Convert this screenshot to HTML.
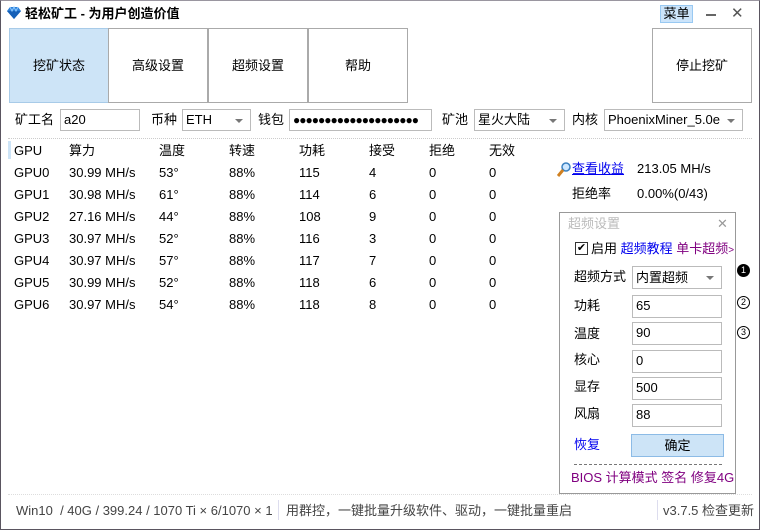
<!DOCTYPE html>
<html><head><meta charset="utf-8"><style>
*{margin:0;padding:0;box-sizing:border-box}
body{width:760px;height:530px;background:#fff;font-family:"Liberation Sans","Noto Sans CJK SC",sans-serif;font-size:13px;line-height:16px;color:#000;position:relative;overflow:hidden}
.a{position:absolute;white-space:nowrap;line-height:16px}
.win{position:absolute;left:0;top:0;width:760px;height:530px;border:1px solid #5a5560;border-top-color:#9a96a0}
.tab{position:absolute;top:28px;width:100px;height:75px;border:1px solid #aaa;background:#fff;text-align:center;line-height:73px;font-size:13px}
.inp{position:absolute;height:22px;border:1px solid #bbb;background:#fff;line-height:20px;padding-left:3px}
.dd::after{content:"";position:absolute;right:7px;top:9px;border:4px solid transparent;border-top:4px solid #777;border-bottom:0}
.c{position:absolute;font-size:13px;line-height:16px}
</style></head><body>
<div class="win"></div>
<svg class="a" style="left:6px;top:6px" width="16" height="14" viewBox="0 0 16 14"><path d="M1 5 L4 1 H12 L15 5 L8 13Z" fill="#2a7fd8"/><path d="M1 5 H15 L8 13Z" fill="#1560b8"/><path d="M4 1 L6 5 L8 1 L10 5 L12 1" stroke="#8cc8ff" fill="none"/></svg>
<div class="a" style="left:25px;top:6px;font-weight:bold;font-size:13px">轻松矿工 - 为用户创造价值</div>
<div class="a" style="left:660px;top:5px;width:33px;height:18px;background:#cce4fa;border:1px solid #99c9f2;text-align:center;line-height:16px">菜单</div>
<div class="a" style="left:706px;top:14px;width:10px;height:2px;background:#666"></div>
<div class="a" style="left:731px;top:6px;font-size:15px;color:#555">✕</div>
<div class="tab" style="left:9px;background:#cde4f7;border-color:#a8cbe8">挖矿状态</div>
<div class="tab" style="left:108px">高级设置</div>
<div class="tab" style="left:208px">超频设置</div>
<div class="tab" style="left:308px">帮助</div>
<div class="tab" style="left:652px">停止挖矿</div>
<div class="a" style="left:15px;top:112px">矿工名</div>
<div class="inp" style="left:60px;top:109px;width:80px">a20</div>
<div class="a" style="left:151px;top:112px">币种</div>
<div class="inp dd" style="left:182px;top:109px;width:69px">ETH</div>
<div class="a" style="left:258px;top:112px">钱包</div>
<div class="inp" style="left:289px;top:109px;width:143px;letter-spacing:-1px;font-size:12px;overflow:hidden">●●●●●●●●●●●●●●●●●●●●</div>
<div class="a" style="left:442px;top:112px">矿池</div>
<div class="inp dd" style="left:474px;top:109px;width:91px">星火大陆</div>
<div class="a" style="left:572px;top:112px">内核</div>
<div class="inp dd" style="left:604px;top:109px;width:139px">PhoenixMiner_5.0e</div>
<div class="a" style="left:8px;top:138px;width:744px;border-top:1px dotted #ccc"></div>
<div class="a" style="left:8px;top:141px;width:3px;height:18px;background:#cde4f7"></div>
<div id="t"></div>
<script>
var cols=[14,69,159,229,299,369,429,489];
var rows=[["GPU","算力","温度","转速","功耗","接受","拒绝","无效"],
["GPU0","30.99 MH/s","53°","88%","115","4","0","0"],
["GPU1","30.98 MH/s","61°","88%","114","6","0","0"],
["GPU2","27.16 MH/s","44°","88%","108","9","0","0"],
["GPU3","30.97 MH/s","52°","88%","116","3","0","0"],
["GPU4","30.97 MH/s","57°","88%","117","7","0","0"],
["GPU5","30.99 MH/s","52°","88%","118","6","0","0"],
["GPU6","30.97 MH/s","54°","88%","118","8","0","0"]];
var h="";rows.forEach(function(r,i){r.forEach(function(c,j){h+='<div class="c" style="left:'+cols[j]+'px;top:'+(143+i*22)+'px">'+c+'</div>'})});
document.getElementById("t").innerHTML=h;
</script>
<svg class="a" style="left:557px;top:162px" width="14" height="16" viewBox="0 0 14 16"><circle cx="9" cy="5" r="4" fill="#cfe8ff" stroke="#3a80c0" stroke-width="1.5"/><path d="M6 8 L1 14" stroke="#d08020" stroke-width="3"/></svg>
<div class="a" style="left:572px;top:161px;color:#0000ee;text-decoration:underline">查看收益</div>
<div class="a" style="left:637px;top:161px">213.05 MH/s</div>
<div class="a" style="left:572px;top:186px">拒绝率</div>
<div class="a" style="left:637px;top:186px">0.00%(0/43)</div>
<div class="a" style="left:559px;top:212px;width:177px;height:282px;border:1px solid #999"></div>
<div class="a" style="left:568px;top:216px;color:#bbb">超频设置</div>
<div class="a" style="left:717px;top:216px;color:#999;font-size:13px">✕</div>
<div class="a" style="left:575px;top:242px;width:13px;height:13px;border:1px solid #333;font-size:11px;line-height:11px;text-align:center">✔</div>
<div class="a" style="left:591px;top:241px">启用 <span style="color:#0000ee">超频教程</span> <span style="color:#800080">单卡超频</span><span style="color:#800080;font-size:10px">&gt;</span></div>
<div class="a" style="left:574px;top:269px">超频方式</div>
<div class="inp dd" style="left:632px;top:266px;width:90px;height:23px;line-height:21px">内置超频</div>
<div class="a" style="left:574px;top:298px">功耗</div><div class="inp" style="left:632px;top:295px;width:90px;height:23px">65</div>
<div class="a" style="left:574px;top:326px">温度</div><div class="inp" style="left:632px;top:322px;width:90px;height:23px">90</div>
<div class="a" style="left:574px;top:352px">核心</div><div class="inp" style="left:632px;top:350px;width:90px;height:23px">0</div>
<div class="a" style="left:574px;top:379px">显存</div><div class="inp" style="left:632px;top:377px;width:90px;height:23px">500</div>
<div class="a" style="left:574px;top:406px">风扇</div><div class="inp" style="left:632px;top:404px;width:90px;height:23px">88</div>
<div class="a" style="left:574px;top:437px;color:#0000ee">恢复</div>
<div class="a" style="left:631px;top:434px;width:93px;height:23px;background:#cde4f7;border:1px solid #8cbbe6;text-align:center;line-height:21px">确定</div>
<div class="a" style="left:574px;top:464px;width:148px;border-top:1px dashed #777"></div>
<div class="a" style="left:571px;top:470px;color:#800080">BIOS 计算模式 签名 修复4G</div>
<div class="a" style="left:737px;top:264px;width:13px;height:13px;border-radius:50%;background:#000;color:#fff;font-size:9px;text-align:center;line-height:13px">1</div>
<div class="a" style="left:737px;top:296px;width:13px;height:13px;border-radius:50%;border:1px solid #000;font-size:9px;text-align:center;line-height:11px">2</div>
<div class="a" style="left:737px;top:326px;width:13px;height:13px;border-radius:50%;border:1px solid #000;font-size:9px;text-align:center;line-height:11px">3</div>
<div class="a" style="left:8px;top:494px;width:744px;border-top:1px dotted #ddd"></div>
<div class="a" style="left:16px;top:503px;color:#444">Win10&nbsp; / 40G / 399.24 / 1070 Ti × 6/1070 × 1</div>
<div class="a" style="left:278px;top:500px;width:1px;height:20px;background:#dde"></div>
<div class="a" style="left:286px;top:503px;color:#444">用群控，一键批量升级软件、驱动，一键批量重启</div>
<div class="a" style="left:657px;top:500px;width:1px;height:20px;background:#dde"></div>
<div class="a" style="left:663px;top:503px;color:#444">v3.7.5 检查更新</div>
</body></html>
